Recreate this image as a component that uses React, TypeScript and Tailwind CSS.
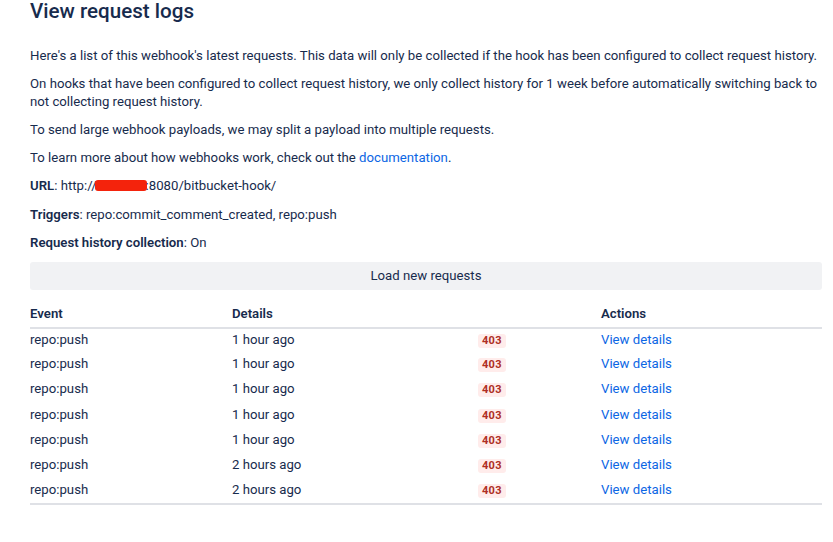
import React from "react";

const rows = [
  "1 hour ago",
  "1 hour ago",
  "1 hour ago",
  "1 hour ago",
  "1 hour ago",
  "2 hours ago",
  "2 hours ago",
];

export default function App() {
  return (
    <div
      className="min-h-[542px] w-[833px] bg-white text-[#172b4d]"
      style={{ fontFamily: "Roboto, 'Noto Sans', sans-serif" }}
    >
      <div className="w-[792px] ml-[30px] pt-0 text-[13.2px] leading-[18px]">
        <h1 className="text-[20.6px] leading-[24px] font-medium mb-[24px] -mt-[1px]">
          View request logs
        </h1>
        <p className="mb-[10px]">
          Here's a list of this webhook's latest requests. This data will only be collected if the hook has been configured to collect request history.
        </p>
        <p className="mb-[10px]">
          On hooks that have been configured to collect request history, we only collect history for 1 week before automatically switching back to not collecting request history.
        </p>
        <p className="mb-[10px]">
          To send large webhook payloads, we may split a payload into multiple requests.
        </p>
        <p className="mb-[10px]">
          To learn more about how webhooks work, check out the{" "}
          <a className="text-[#0c66e4]">documentation</a>.
        </p>
        <p className="mb-[10.5px]">
          <span className="font-semibold">URL</span>: http://
          <span className="inline-block align-middle w-[52px] h-[11px] bg-[#f4230c] rounded-[3px] -ml-[2px] -mr-[1px] -mt-[2px]"></span>
          :8080/bitbucket-hook/
        </p>
        <p className="mb-[10.5px]">
          <span className="font-semibold">Triggers</span>: repo:commit_comment_created, repo:push
        </p>
        <p className="mb-[10px]">
          <span className="font-semibold">Request history collection</span>: On
        </p>
        <button className="block w-full h-[28px] bg-[#f1f2f4] rounded-[3px] text-[13.2px] font-normal text-[#172b4d]">
          Load new requests
        </button>
        <table className="w-full mt-[15px] border-collapse">
          <thead>
            <tr className="border-b-2 border-[#dfe1e6]">
              <th className="text-left font-semibold w-[202px] pb-[4px] h-[20px] align-bottom">Event</th>
              <th className="text-left font-semibold w-[246px] pb-[4px] align-bottom">Details</th>
              <th className="text-left font-semibold w-[123px] pb-[4px] align-bottom"></th>
              <th className="text-left font-semibold pb-[4px] align-bottom">Actions</th>
            </tr>
          </thead>
          <tbody className="border-b-2 border-[#dfe1e6]">
            {rows.map((r, i) => (
              <tr key={i} className="h-[25.2px]">
                <td className="align-middle pb-[3px]">repo:push</td>
                <td className="align-middle pb-[3px]">{r}</td>
                <td className="align-middle pb-[3px]">
                  <span className="inline-flex items-center justify-center h-[14px] px-[4px] rounded-[3px] bg-[#ffeceb] text-[#ae2e24] text-[11px] font-bold tracking-[0.3px]">
                    403
                  </span>
                </td>
                <td className="align-middle pb-[3px]">
                  <a className="text-[#0c66e4]">View details</a>
                </td>
              </tr>
            ))}
          </tbody>
        </table>
      </div>
    </div>
  );
}
